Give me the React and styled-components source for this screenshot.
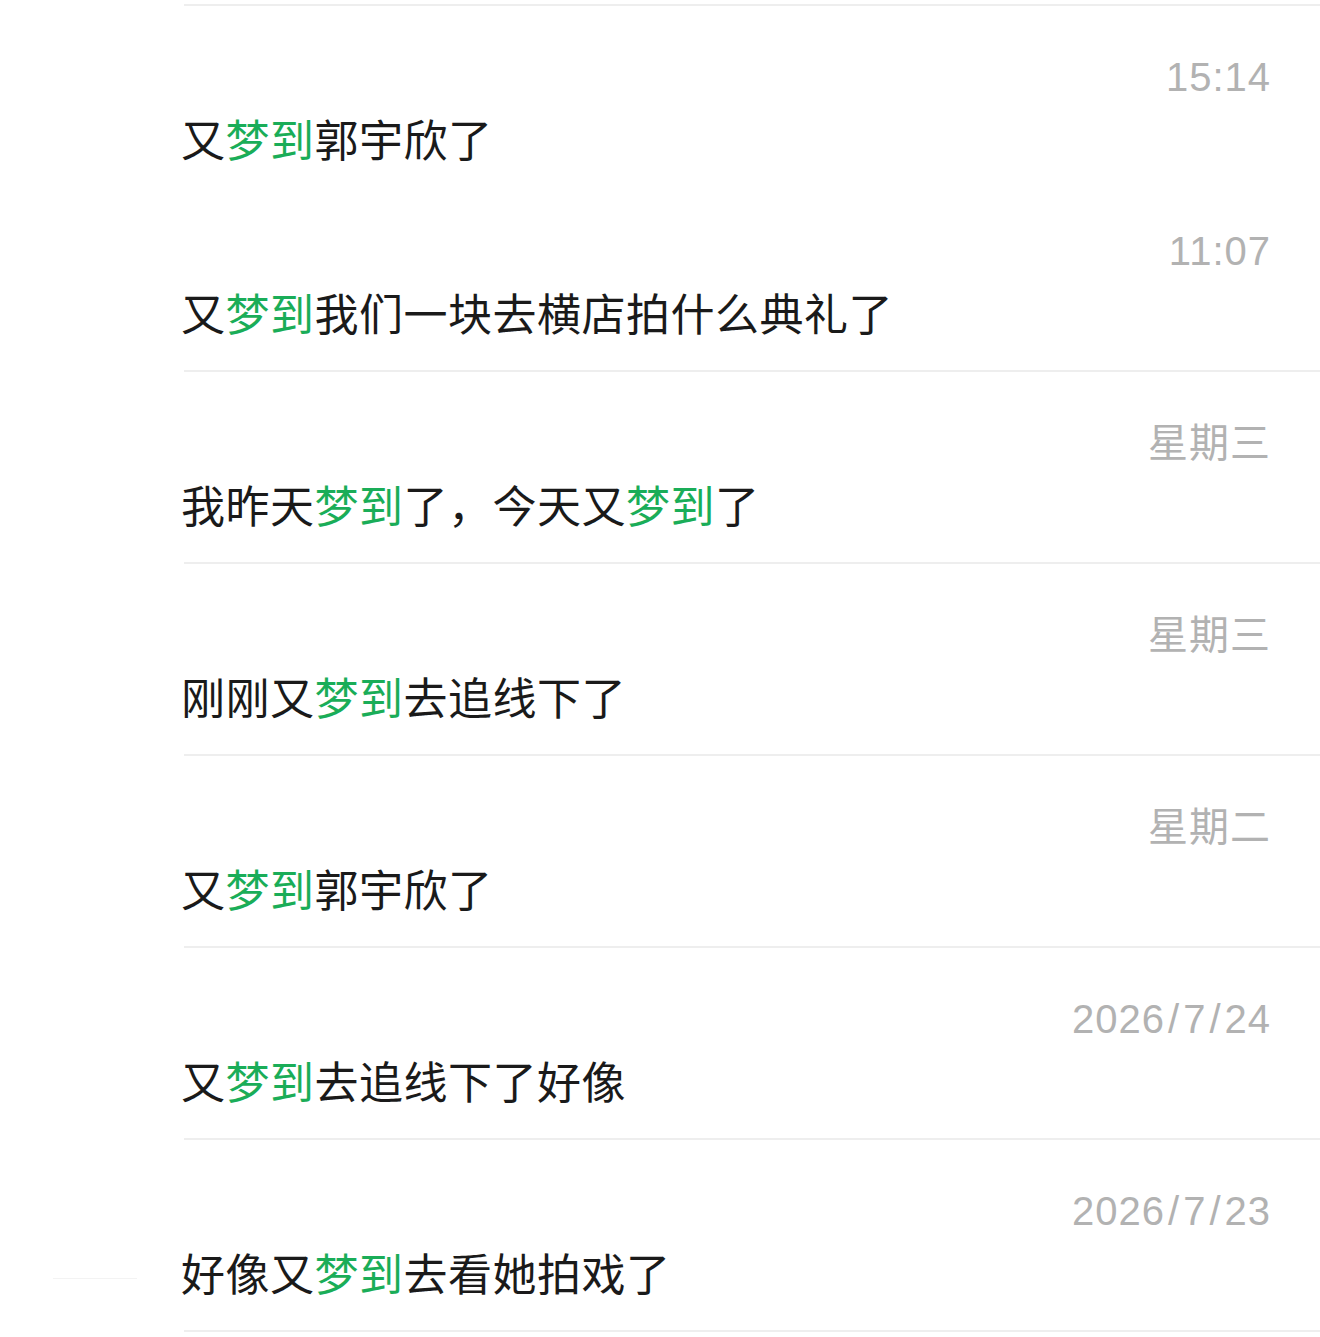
import styled, { createGlobalStyle } from "styled-components";

const GlobalStyle = createGlobalStyle`
    html, body {
        margin: 0;
        padding: 0;
        background: #ffffff;
    }
    body {
        font-family: "Noto Sans CJK SC", "Liberation Sans", sans-serif;
    }
`;

const results = [
    { time: "15:14", parts: ["又", "梦到", "郭宇欣了"], noLine: true, short: true },
    { time: "11:07", parts: ["又", "梦到", "我们一块去横店拍什么典礼了"] },
    { time: "星期三", parts: ["我昨天", "梦到", "了，今天又", "梦到", "了"] },
    { time: "星期三", parts: ["刚刚又", "梦到", "去追线下了"] },
    { time: "星期二", parts: ["又", "梦到", "郭宇欣了"] },
    { time: "2026/7/24", parts: ["又", "梦到", "去追线下了好像"] },
    { time: "2026/7/23", parts: ["好像又", "梦到", "去看她拍戏了"], mark: true },
];

// 날짜의 슬래시는 조금 넓게
const renderTime = (time) =>
    time.split("/").map((chunk, i) => (
        <span key={i}>
            {i > 0 && <Slash>/</Slash>}
            {chunk}
        </span>
    ));

const App = () => {
    return (
        <>
            <GlobalStyle />
            <Page>
                <TopLine />
                {results.map((item, i) => (
                    <Row key={i}>
                        <Gutter>{item.mark && <StrayMark />}</Gutter>
                        <Body $noLine={item.noLine} $short={item.short}>
                            <Time>{renderTime(item.time)}</Time>
                            <Message>
                                {/* 홀수 index = 검색어 하이라이트 */}
                                {item.parts.map((p, j) =>
                                    j % 2 === 1 ? <Hit key={j}>{p}</Hit> : <span key={j}>{p}</span>
                                )}
                            </Message>
                        </Body>
                    </Row>
                ))}
            </Page>
        </>
    );
};

const Page = styled.div`
    width: 1320px;
    height: 1337px;
    overflow: hidden;
    padding-top: 4px;
    box-sizing: border-box;
    background: #ffffff;
`;

const TopLine = styled.div`
    margin-left: 184px;
    height: 2px;
    background: #eeeeee;
`;

const Row = styled.div`
    display: flex;
`;

const Gutter = styled.div`
    width: 184px;
    flex-shrink: 0;
    display: flex;
    flex-direction: column;
    justify-content: flex-end;
    padding-bottom: 53px;
    box-sizing: border-box;
`;

const StrayMark = styled.div`
    width: 84px;
    height: 1px;
    margin-left: 53px;
    background: #f3f3f3;
`;

const Body = styled.div`
    flex: 1;
    display: flex;
    flex-direction: column;
    height: ${(p) => (p.$short ? "174px" : "190px")};
    border-bottom: ${(p) => (p.$noLine ? "none" : "2px solid #eeeeee")};
`;

const Time = styled.div`
    margin-top: 43px;
    padding-right: 49px;
    height: 56px;
    line-height: 56px;
    text-align: right;
    font-family: "Liberation Sans", "Noto Sans CJK SC", sans-serif;
    font-size: 40px;
    letter-spacing: 1px;
    color: #b2b2b2;
`;

const Slash = styled.span`
    margin: 0 3px;
`;

const Message = styled.div`
    margin-top: 5px;
    margin-left: -3px;
    height: 56px;
    line-height: 56px;
    font-size: 44px;
    letter-spacing: 0.5px;
    color: #1a1a1a;
    white-space: nowrap;
`;

const Hit = styled.span`
    color: #1aad58;
`;

export default App;
